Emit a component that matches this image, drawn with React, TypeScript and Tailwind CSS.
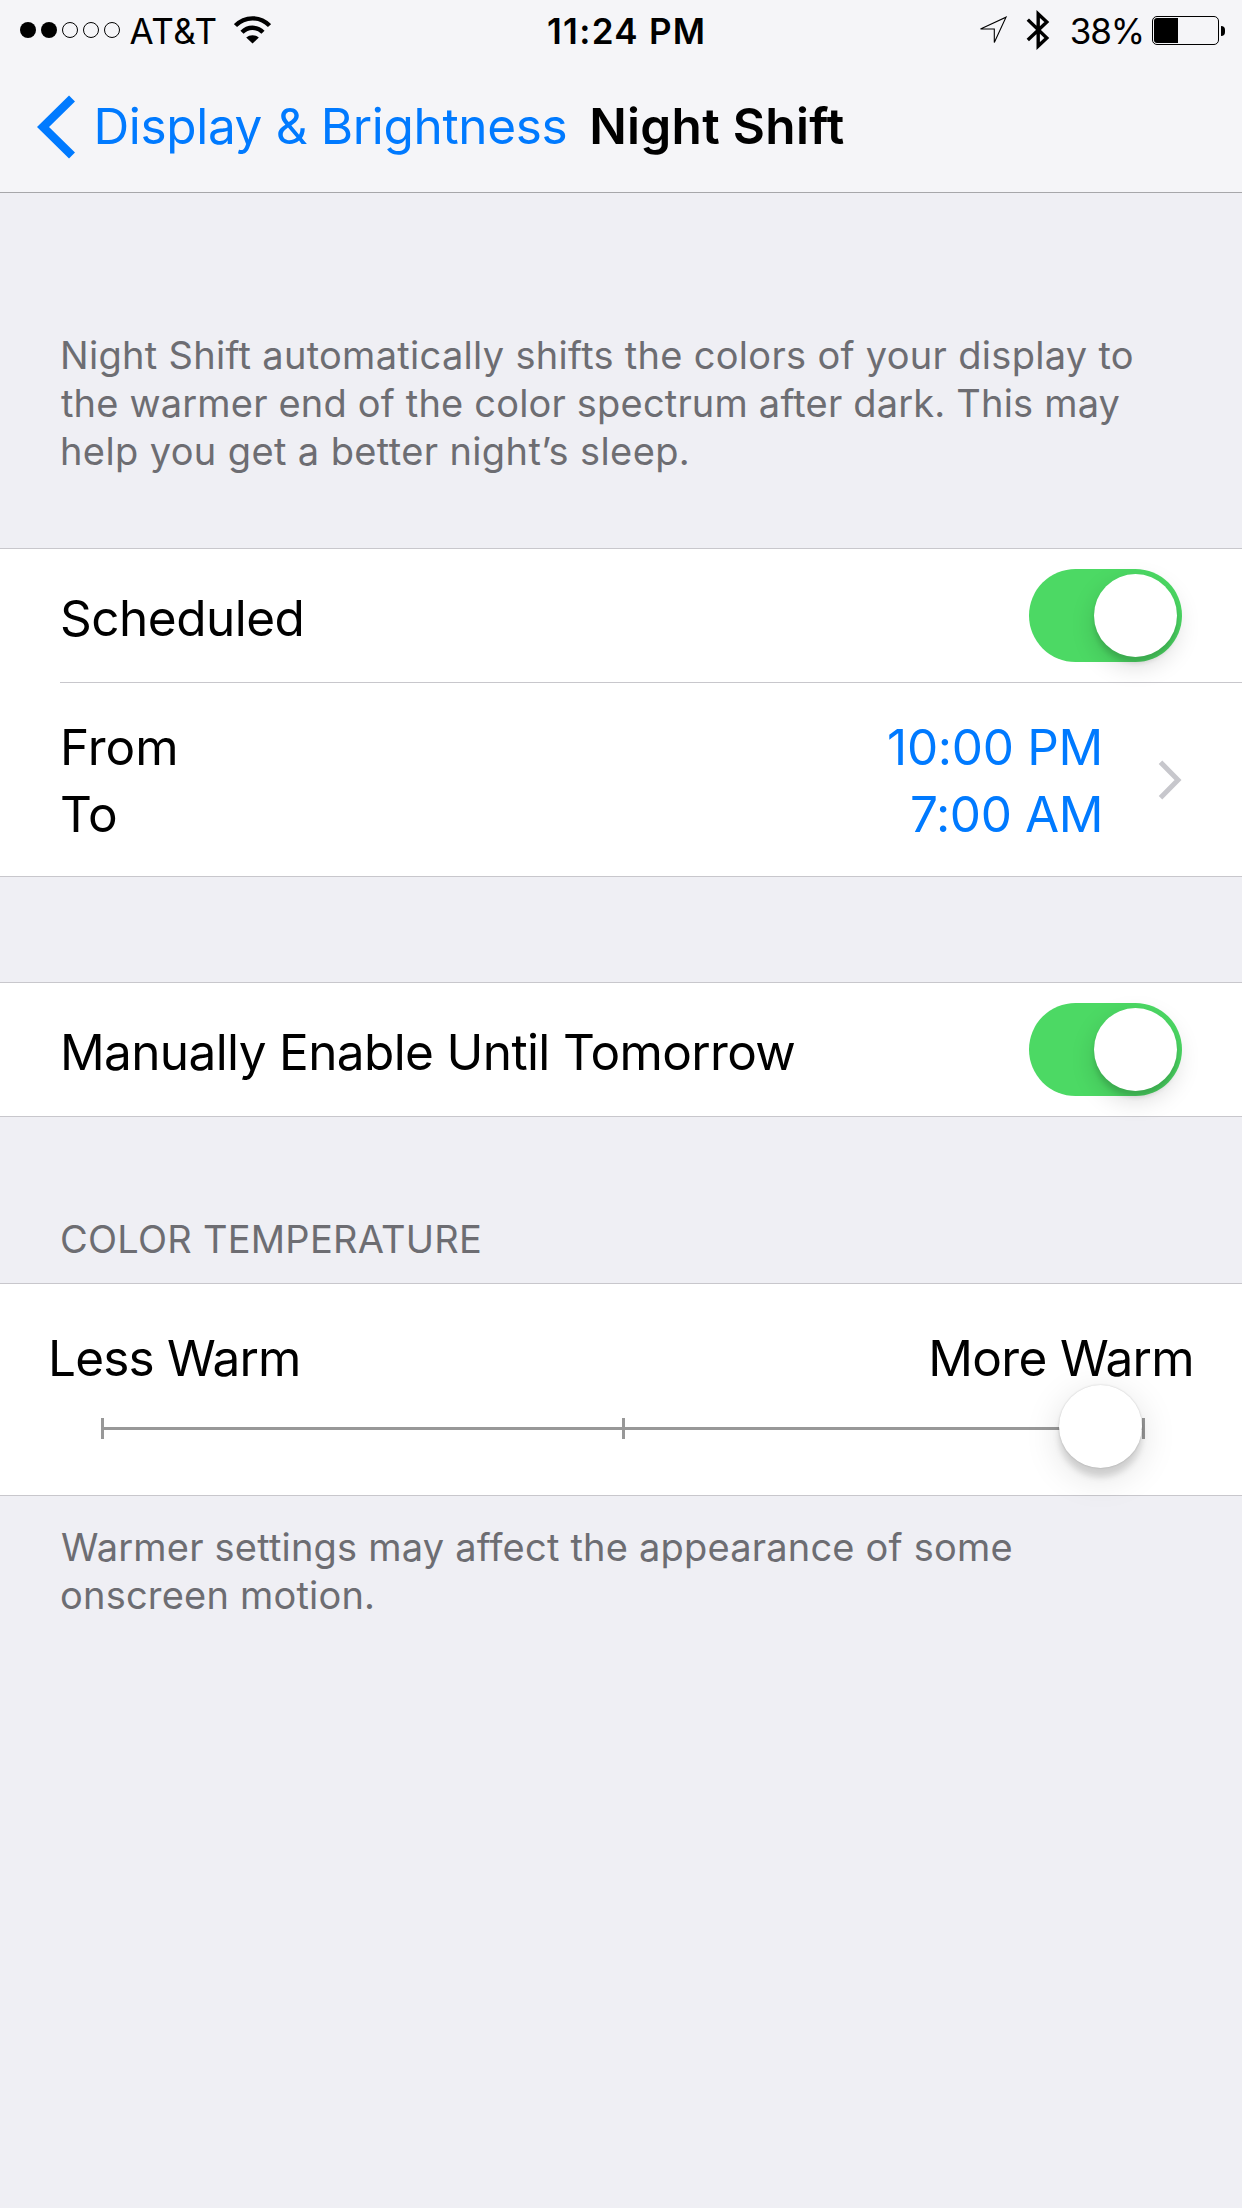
import type { ReactNode } from "react";

const ROW_TEXT = "text-[49.5px] leading-[60px] whitespace-nowrap";
const NOTE_TEXT = "text-[38px] leading-[48px] text-[#6d6d72] whitespace-nowrap";

function SignalDots({ strength }: { strength: number }) {
  return (
    <div className="flex gap-[5px]">
      {[0, 1, 2, 3, 4].map((i) => (
        <span
          key={i}
          className={
            i < strength
              ? "size-4 rounded-full bg-black"
              : "size-4 rounded-full border border-black"
          }
        />
      ))}
    </div>
  );
}

function WifiIcon() {
  return (
    <svg className="ml-4 h-7 w-[37px]" viewBox="0 0 37 28" fill="none">
      <path d="M1.5 9.6A23.4 23.4 0 0 1 35.5 9.6" stroke="black" strokeWidth="4.3" />
      <path d="M8 16.3A14.4 14.4 0 0 1 29 16.3" stroke="black" strokeWidth="4.3" />
      <path d="M12.2 21.5A9.6 9.6 0 0 1 24.8 21.5L18.5 27.6Z" fill="black" />
    </svg>
  );
}

function LocationIcon() {
  return (
    <svg className="h-[31px] w-[30px]" viewBox="0 0 30 31" fill="none">
      <path d="M2.5 14L28 2.2L16.3 27.5V14Z" stroke="black" strokeWidth="1.1" />
    </svg>
  );
}

function BluetoothIcon() {
  return (
    <svg className="ml-[18px] h-[42px] w-6" viewBox="0 0 24 42" fill="none">
      <path
        d="M1.8 10.6L20.8 29L12.2 37V5L20.8 13L1.8 31"
        stroke="black"
        strokeWidth="3.4"
      />
    </svg>
  );
}

function BatteryIcon() {
  return (
    <div className="ml-2 flex items-center gap-[2px]">
      <div className="h-[29px] w-[67px] rounded-[5px] border border-black p-px">
        <div className="h-full w-[24px] rounded-l-[3px] bg-black" />
      </div>
      <div className="h-[10px] w-[4px] rounded-r-full bg-black" />
    </div>
  );
}

function StatusBar() {
  return (
    <div className="grid h-[62px] grid-cols-[547px_1fr_auto] items-center text-[35px] leading-[62px]">
      <div className="flex items-center pl-5">
        <div className="-mt-[2px]">
          <SignalDots strength={2} />
        </div>
        <span className="ml-[9.5px] tracking-[0.6px]">AT&amp;T</span>
        <div className="-mt-[3px]">
          <WifiIcon />
        </div>
      </div>
      <span className="font-[570] tracking-[1.3px]">11:24 PM</span>
      <div className="flex items-center pr-[17px]">
        <div className="-mt-[2px] flex items-center">
          <LocationIcon />
          <BluetoothIcon />
        </div>
        <span className="ml-5 tracking-[-1.1px]">38%</span>
        <div className="-mt-[1px]">
          <BatteryIcon />
        </div>
      </div>
    </div>
  );
}

function NavBar() {
  return (
    <div className="flex h-[130px] items-center pb-[2px] pl-[37px] text-[49.5px] leading-[60px] whitespace-nowrap">
      <svg className="mt-px h-16 w-[39px]" viewBox="0 0 39 64" fill="none">
        <path d="M35 3.5L6 32L35 60.5" stroke="#007aff" strokeWidth="8.5" />
      </svg>
      <span className="ml-[17.5px] tracking-[-0.35px] text-[#007aff]">
        Display &amp; Brightness
      </span>
      <h1 className="ml-[22px] font-semibold tracking-[0.3px]">Night Shift</h1>
    </div>
  );
}

function Toggle() {
  return (
    <div className="flex h-[93px] w-[153px] justify-end rounded-full bg-[#4cd964] p-[5px]">
      <div className="size-[83px] rounded-full bg-white shadow-[0_9px_24px_rgba(0,0,0,0.15),0_6px_5px_rgba(0,0,0,0.12)]" />
    </div>
  );
}

function Group({ children }: { children: ReactNode }) {
  return <section className="border-y border-[#c8c7cc] bg-white">{children}</section>;
}

function ToggleRow({ children }: { children: ReactNode }) {
  return (
    <div className="flex h-[133px] items-center justify-between px-[60px]">
      <div className={`pt-[4px] ${ROW_TEXT}`}>{children}</div>
      <Toggle />
    </div>
  );
}

function ScheduleRow() {
  return (
    <div className="ml-[60px] flex h-[194px] items-center border-t border-[#c8c7cc] pr-[60px] text-[49.5px] leading-[67px] whitespace-nowrap">
      <div className="mt-[2px]">
        <div>From</div>
        <div>To</div>
      </div>
      <div className="mt-[2px] ml-auto text-right text-[#007aff]">
        <div className="tracking-[-0.3px]">10:00 PM</div>
        <div className="tracking-[-0.42px]">7:00 AM</div>
      </div>
      <svg className="mt-px ml-[55px] h-10 w-6" viewBox="0 0 24 40" fill="none">
        <path d="M2.5 2.2L20 20L2.5 37.8" stroke="#c7c7cc" strokeWidth="5" />
      </svg>
    </div>
  );
}

function WarmthSlider() {
  return (
    <div className="relative mr-[97px] mt-[30px] ml-[101px] flex h-[21px] items-center justify-between">
      <div className="absolute inset-x-0 top-[9px] h-[3px] bg-[#989898]" />
      <span className="h-full w-[3px] bg-[#989898]" />
      <span className="h-full w-[3px] bg-[#989898]" />
      <span className="h-full w-[3px] bg-[#989898]" />
      <div className="absolute top-[-33px] right-[3px] size-[83px] rounded-full bg-white shadow-[0_0_2px_rgba(0,0,0,0.2),0_9px_6px_rgba(0,0,0,0.13),0_9px_36px_rgba(0,0,0,0.13)]" />
    </div>
  );
}

export default function App() {
  return (
    <div className="min-h-[2208px] w-[1242px] overflow-hidden bg-[#efeff4] font-['Inter',sans-serif] text-black">
      <header className="border-b border-[#a7a7aa] bg-[#f5f5f8]">
        <StatusBar />
        <NavBar />
      </header>

      <main>
        <p className={`mt-[138px] mb-[73px] pl-[60px] ${NOTE_TEXT}`}>
          <span className="block tracking-[0.3px]">
            Night Shift automatically shifts the colors of your display to
          </span>
          <span className="block pl-px tracking-[0.18px]">
            the warmer end of the color spectrum after dark. This may
          </span>
          <span className="block tracking-[0.38px]">
            help you get a better night’s sleep.
          </span>
        </p>

        <Group>
          <ToggleRow>
            <span className="tracking-[-0.51px]">Scheduled</span>
          </ToggleRow>
          <ScheduleRow />
        </Group>

        <div className="h-[105px]" />

        <Group>
          <ToggleRow>
            <span className="tracking-[-0.63px]">Manually Enable Until Tomorrow</span>
          </ToggleRow>
        </Group>

        <h2 className={`mt-[98px] mb-5 pl-[60px] tracking-[0.25px] ${NOTE_TEXT}`}>
          COLOR TEMPERATURE
        </h2>

        <Group>
          <div className="h-[211px] pt-[44px]">
            <div className={`flex justify-between px-[48px] ${ROW_TEXT}`}>
              <span className="tracking-[-0.8px]">Less Warm</span>
              <span className="tracking-[-0.68px]">More Warm</span>
            </div>
            <WarmthSlider />
          </div>
        </Group>

        <p className={`mt-[27px] pl-[60px] ${NOTE_TEXT}`}>
          <span className="block pl-px tracking-[0.2px]">
            Warmer settings may affect the appearance of some
          </span>
          <span className="block tracking-[0.2px]">onscreen motion.</span>
        </p>
      </main>
    </div>
  );
}
